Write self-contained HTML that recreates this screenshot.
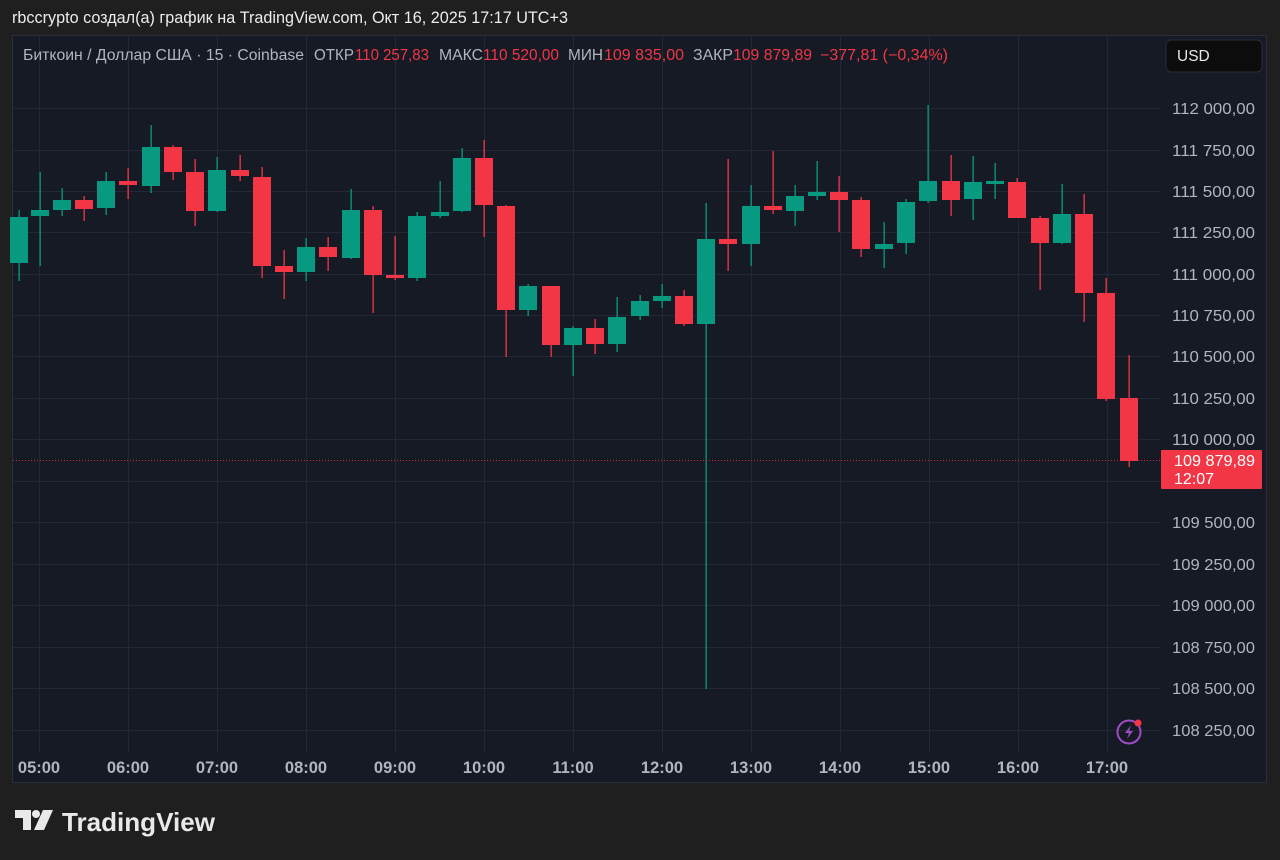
<!DOCTYPE html>
<html><head><meta charset="utf-8"><style>
body{margin:0;width:1280px;height:860px;background:#1f1f1f;font-family:"Liberation Sans",sans-serif;overflow:hidden;position:relative}
.cap{position:absolute;left:12px;top:9px;color:#ececec;font-size:16.2px}
.panel{position:absolute;left:12px;top:35px;width:1255px;height:748px;background:#161a25;border:1px solid #2a2e39;box-sizing:border-box}
svg{position:absolute;left:0;top:0}
</style></head><body>
<div class="cap">rbccrypto создал(а) график на TradingView.com, Окт 16, 2025 17:17 UTC+3</div>
<div class="panel"></div>
<svg id="s" width="1280" height="860" xmlns="http://www.w3.org/2000/svg"></svg>
<svg width="1280" height="860" style="pointer-events:none">
<g transform="translate(15,810)" fill="#e9e9e9">
<path d="M0 0H16V20H8V8H0Z"/><circle cx="21" cy="4" r="4"/><path d="M28 0H38L29 20H19Z"/>
</g>
<text x="62" y="831" fill="#e9e9e9" font-size="26" font-weight="bold" font-family="Liberation Sans" textLength="153" lengthAdjust="spacingAndGlyphs">TradingView</text>
</svg>
<script>
const s=document.getElementById('s');let h='';
const hx=[39,128,217,306,395,484,573,662,751,840,929,1018,1107];
const ty=[108,150,191,232,274,315,356,398,439,481,522,564,605,647,688,730];
hx.forEach(x=>h+=`<line x1="${x+.5}" y1="36" x2="${x+.5}" y2="752" stroke="#242836"/>`);
ty.forEach(y=>h+=`<line x1="13" y1="${y+.5}" x2="1160" y2="${y+.5}" stroke="#242836"/>`);
const pl=['112 000,00','111 750,00','111 500,00','111 250,00','111 000,00','110 750,00','110 500,00','110 250,00','110 000,00','','109 500,00','109 250,00','109 000,00','108 750,00','108 500,00','108 250,00'];
ty.forEach((y,i)=>{if(pl[i])h+=`<text x="1255" y="${y+6}" text-anchor="end" fill="#b2b5be" font-size="16" font-family="Liberation Sans" textLength="83" lengthAdjust="spacingAndGlyphs">${pl[i]}</text>`});
const tl=['05:00','06:00','07:00','08:00','09:00','10:00','11:00','12:00','13:00','14:00','15:00','16:00','17:00'];
hx.forEach((x,i)=>h+=`<text x="${x}" y="773" text-anchor="middle" fill="#b2b5be" font-size="16.5" font-weight="bold" font-family="Liberation Sans">${tl[i]}</text>`);
const c=[[19,'g',217,263,210,281],[40,'g',210,216,172,266],[62,'g',200,210,188,216],[84,'r',200,209,196,221],[106,'g',181,208,172,215],[128,'r',181,185,168,199],[151,'g',147,186,125,193],[173,'r',147,172,145,180],[195,'r',172,211,159,226],[217,'g',170,211,157,212],[240,'r',170,176,155,181],[262,'r',177,266,167,278],[284,'r',266,272,250,299],[306,'g',247,272,238,281],[328,'r',247,257,237,271],[351,'g',210,258,189,259],[373,'r',210,275,206,313],[395,'r',275,278,236,280],[417,'g',216,278,212,281],[440,'g',212,216,181,218],[462,'g',158,211,148,212],[484,'r',158,205,140,237],[506,'r',206,310,205,357],[528,'g',286,310,284,316],[551,'r',286,345,286,357],[573,'g',328,345,326,376],[595,'r',328,344,319,354],[617,'g',317,344,297,352],[640,'g',301,316,295,320],[662,'g',296,301,284,308],[684,'r',296,324,290,326],[706,'g',239,324,203,689],[728,'r',239,244,159,271],[751,'g',206,244,185,266],[773,'r',206,210,151,214],[795,'g',196,211,185,226],[817,'g',192,196,161,200],[839,'r',192,200,176,232],[861,'r',200,249,197,257],[884,'g',244,249,222,268],[906,'g',202,243,199,254],[928,'g',181,201,105,203],[951,'r',181,200,155,216],[973,'g',182,199,156,220],[995,'g',181,182,163,199],[1017,'r',182,218,178,218],[1040,'r',218,243,216,290],[1062,'g',214,243,184,244],[1084,'r',214,293,194,322],[1106,'r',293,399,278,401],[1129,'r',398,461,355,467]];
c.forEach(([x,k,t,b,wt,wb])=>{const col=k=='g'?'#089981':'#f23645';
h+=`<rect x="${x-0.5}" y="${wt}" width="1.3" height="${wb-wt}" fill="${col}"/>`;
h+=`<rect x="${x-9}" y="${t}" width="18" height="${Math.max(b-t,3)}" fill="${col}"/>`;});
h+=`<line x1="13" y1="460.5" x2="1160" y2="460.5" stroke="#f23645" stroke-dasharray="1 2" opacity=".8"/>`;
h+=`<rect x="1161" y="450" width="101" height="39" rx="1" fill="#f23645"/>`;
h+=`<text x="1174" y="466" fill="#fff" font-size="16" font-family="Liberation Sans" textLength="81" lengthAdjust="spacingAndGlyphs">109 879,89</text><text x="1174" y="484" fill="#fff" font-size="16" font-family="Liberation Sans">12:07</text>`;
h+=`<rect x="1166" y="40" width="96" height="32" rx="5" fill="#0c0c0c" stroke="#2a2e39"/><text x="1177" y="61" fill="#e8e8e8" font-size="15.5" font-family="Liberation Sans">USD</text>`;
h+=`<circle cx="1129" cy="732" r="11.5" fill="none" stroke="#a04bc7" stroke-width="2"/><path d="M1131 725l-6 8h4l-2 6 6-8h-4z" fill="#a04bc7"/><circle cx="1138" cy="723" r="3.5" fill="#f23645"/>`;
const T=(x,w,col,t)=>`<text x="${x}" y="60" font-size="15.5" font-family="Liberation Sans" fill="${col}" textLength="${w}" lengthAdjust="spacingAndGlyphs">${t}</text>`;
const G='#b2b5be',R='#f23645';
h+=T(23,281,G,'Биткоин / Доллар США · 15 · Coinbase');
h+=T(314,40,G,'ОТКР')+T(355,74,R,'110 257,83');
h+=T(439,44,G,'МАКС')+T(483,76,R,'110 520,00');
h+=T(568,35,G,'МИН')+T(604,80,R,'109 835,00');
h+=T(693,40,G,'ЗАКР')+T(733,79,R,'109 879,89');
h+=T(820,128,R,'−377,81 (−0,34%)');
s.innerHTML=h;
</script>
</body></html>
